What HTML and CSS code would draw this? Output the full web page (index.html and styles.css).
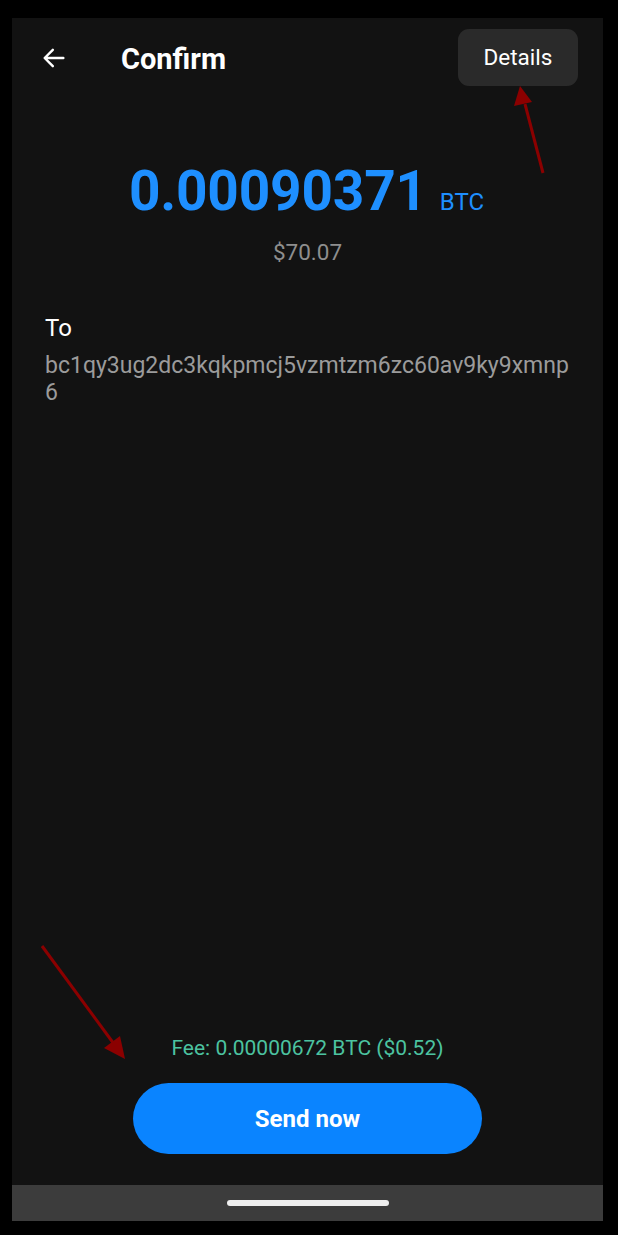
FILE: index.html
```html
<!DOCTYPE html>
<html>
<head>
<meta charset="utf-8">
<link rel="stylesheet" href="styles.css">
</head>
<body>
<div class="screen">
  <header class="topbar">
    <div class="left">
      <svg class="back" width="28" height="28" viewBox="0 0 24 24"><path d="M20 12H4.5M11 5l-7 7 7 7" fill="none" stroke="#fff" stroke-width="2.1" stroke-linecap="round" stroke-linejoin="round"/></svg>
      <h1 class="title">Confirm</h1>
    </div>
    <button class="details">Details</button>
  </header>
  <main class="content">
    <div class="amount">
      <span class="value">0.00090371</span><span class="unit">BTC</span>
    </div>
    <div class="fiat">$70.07</div>
    <div class="to">
      <div class="to-label">To</div>
      <div class="address">bc1qy3ug2dc3kqkpmcj5vzmtzm6zc60av9ky9xmnp6</div>
    </div>
  </main>
  <footer class="bottom">
    <div class="fee">Fee: 0.00000672 BTC ($0.52)</div>
    <button class="send">Send now</button>
  </footer>
  <div class="navbar"><div class="handle"></div></div>
</div>
<svg class="annot" width="618" height="1235" viewBox="0 0 618 1235">
  <line x1="543" y1="173" x2="525" y2="104" stroke="#8b0000" stroke-width="3"/>
  <polygon points="520,86 514,106 532,102" fill="#8b0000"/>
  <line x1="42" y1="946" x2="114" y2="1044" stroke="#8b0000" stroke-width="3"/>
  <polygon points="125,1059 104,1048 120,1036" fill="#8b0000"/>
</svg>
</body>
</html>
```
FILE: styles.css
```css
* { box-sizing: border-box; }
html, body { margin: 0; padding: 0; }
body {
  background: #000;
  width: 618px;
  height: 1235px;
  font-family: Roboto, "Liberation Sans", sans-serif;
  position: relative;
  overflow: hidden;
}
.screen {
  margin: 18px 0 0 12px;
  width: 591px;
  height: 1203px;
  background: #121212;
  display: flex;
  flex-direction: column;
}
.topbar {
  height: 82px;
  display: flex;
  align-items: center;
  justify-content: space-between;
  padding: 0 25px 0 28px;
}
.left { display: flex; align-items: center; }
.back { display: block; margin-right: 53px; margin-top: -2px; }
.title {
  margin: 0;
  color: #fff;
  font-size: 29px;
  font-weight: 700;
}
.details {
  margin-top: -4px;
  width: 120px;
  height: 57px;
  border: none;
  border-radius: 11px;
  background: #2a2a2a;
  color: #fff;
  font-family: inherit;
  font-size: 22.5px;
  padding: 0;
}
.content {
  flex: 1;
  display: flex;
  flex-direction: column;
}
.amount {
  margin-top: 64px;
  text-align: center;
  color: #1e8fff;
  line-height: 1;
  padding-right: 2px;
}
.value {
  font-size: 55px;
  font-weight: 700;
  letter-spacing: -0.2px;
}
.unit {
  font-size: 24px;
  margin-left: 13px;
}
.fiat {
  margin-top: 20px;
  text-align: center;
  color: #8e8e8e;
  font-size: 22.5px;
}
.to {
  margin-top: 48px;
  padding: 0 28px 0 33px;
}
.to-label {
  color: #fff;
  font-size: 24px;
  line-height: 30px;
}
.address {
  margin-top: 9px;
  color: #9b9b9b;
  font-size: 23px;
  line-height: 27px;
  word-break: break-all;
}
.bottom {
  display: flex;
  flex-direction: column;
  align-items: center;
  padding-bottom: 31px;
}
.fee {
  color: #4cc3a0;
  font-size: 21px;
  line-height: 24px;
}
.send {
  margin-top: 23px;
  width: 349px;
  height: 71px;
  border: none;
  border-radius: 36px;
  background: #0a84ff;
  color: #fff;
  font-family: inherit;
  font-size: 24px;
  font-weight: 700;
}
.navbar {
  height: 36px;
  background: #3c3c3c;
  display: flex;
  align-items: center;
  justify-content: center;
}
.handle {
  width: 162px;
  height: 6px;
  border-radius: 3px;
  background: #efefef;
}
.annot {
  position: absolute;
  left: 0;
  top: 0;
  pointer-events: none;
}
```
